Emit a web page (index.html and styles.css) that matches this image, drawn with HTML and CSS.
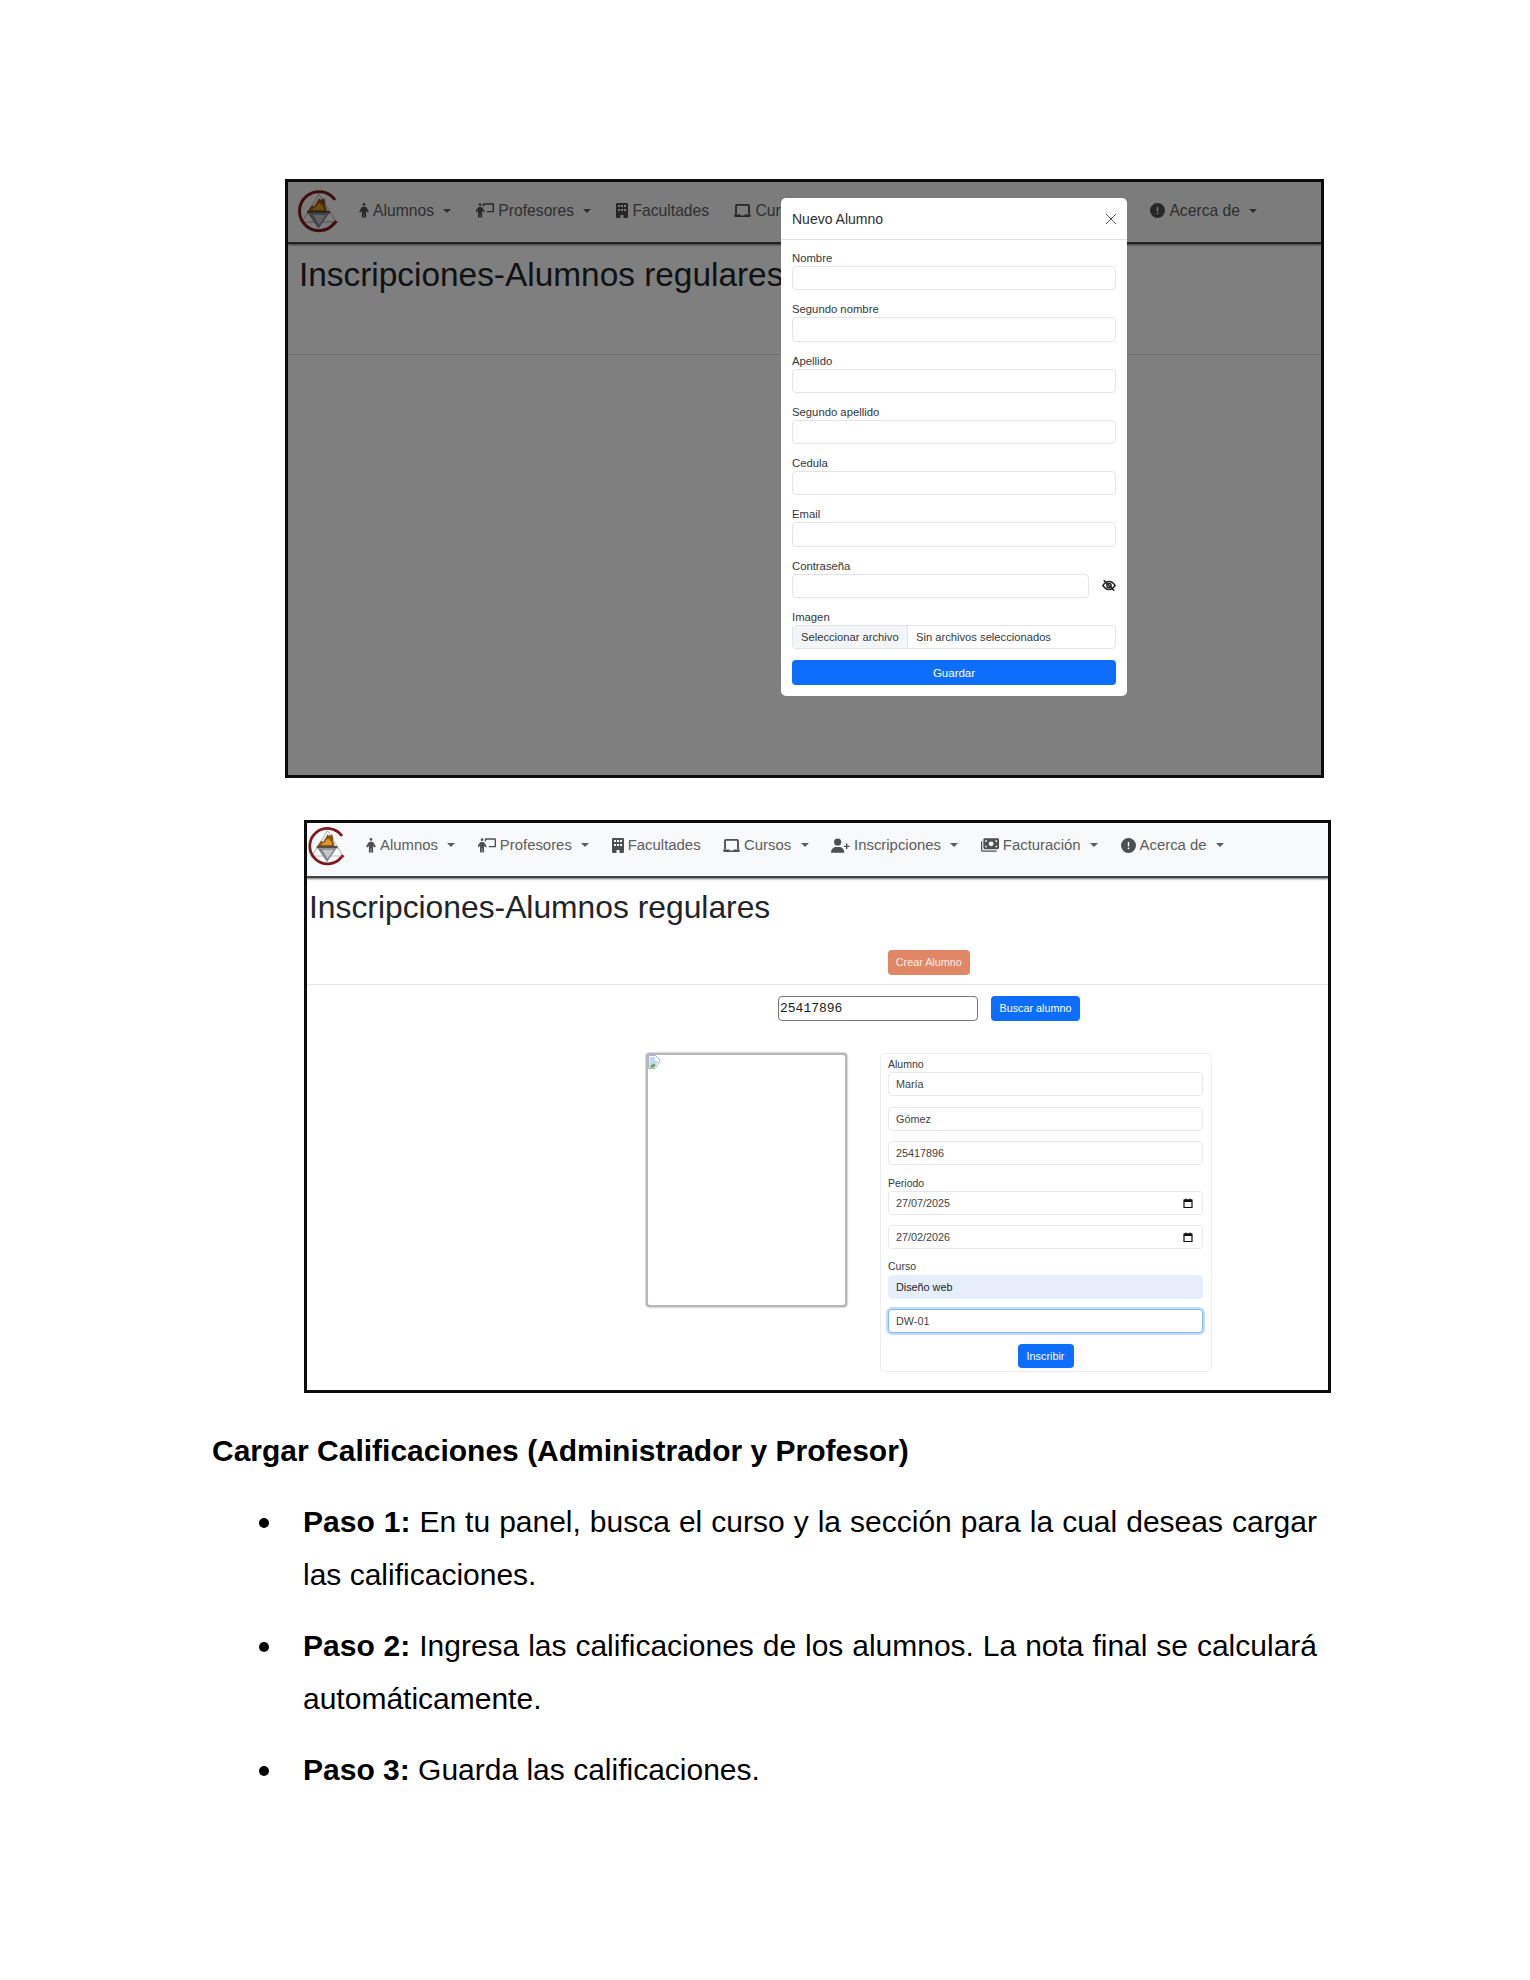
FILE: index.html
```html
<!DOCTYPE html>
<html lang="es">
<head>
<meta charset="utf-8">
<title>Manual de usuario</title>
<link rel="stylesheet" href="styles.css">
</head>
<body>
<svg class="sprite" aria-hidden="true">
  <symbol id="i-person" viewBox="0 0 320 512"><path d="M112 48a48 48 0 1 1 96 0 48 48 0 1 1 -96 0zm40 304V480c0 17.7-14.3 32-32 32s-32-14.3-32-32V256.900L59.400 304.500c-9.100 15.100-28.800 20-43.900 10.900s-20-28.800-10.900-43.900l58.300-97c17.400-28.900 48.600-46.600 82.300-46.600h29.700c33.700 0 64.900 17.700 82.300 46.600l58.300 97c9.100 15.100 4.200 34.800-10.900 43.900s-34.800 4.200-43.900-10.900L232 256.900V480c0 17.700-14.300 32-32 32s-32-14.300-32-32V352H152z"/></symbol>
  <symbol id="i-teacher" viewBox="0 0 640 512"><path d="M144 96a48 48 0 1 0 0-96 48 48 0 1 0 0 96zm-8 384V352h16v128c0 17.700 14.300 32 32 32s32-14.300 32-32V256.900l28.600 47.500c9.100 15.100 28.800 20 43.900 10.900s20-28.800 10.900-43.900l-58.300-97c-17.400-28.900-48.600-46.600-82.300-46.600H129.100c-33.700 0-64.900 17.700-82.300 46.600l-58.300 97c-9.100 15.100-4.200 34.800 10.900 43.900s34.800 4.200 43.900-10.900L72 256.900V480c0 17.700 14.300 32 32 32s32-14.300 32-32z"/><path d="M240 32c0-17.700 14.300-32 32-32H608c17.700 0 32 14.300 32 32V288c0 17.700-14.300 32-32 32H384V272H592V48H288v64H240z"/></symbol>
  <symbol id="i-building" viewBox="0 0 12 15"><path fill-rule="evenodd" d="M1.200 0h9.600A1.200 1.200 0 0 1 12 1.200v12.600a1.200 1.200 0 0 1-1.200 1.200H7.500v-3h-3v3H1.200A1.200 1.200 0 0 1 0 13.800V1.200A1.200 1.200 0 0 1 1.200 0zM2 2v2h2V2zm3 0v2h2V2zm3 0v2h2V2zM2 6v2h2V6zm3 0v2h2V6zm3 0v2h2V6z"/></symbol>
  <symbol id="i-laptop" viewBox="0 0 18 14"><path fill-rule="evenodd" d="M3 0h12a2 2 0 0 1 2 2v9h-2V2H3v9H1V2a2 2 0 0 1 2-2z"/><path d="M0 11.300h6.800v1h4.400v-1H18v1A1.700 1.700 0 0 1 16.300 14H1.700A1.700 1.700 0 0 1 0 12.300z"/></symbol>
  <symbol id="i-userplus" viewBox="0 0 20 15"><circle cx="7" cy="3.800" r="3.800"/><path d="M0 15c0-4 2.800-6 5.500-6h3c2.700 0 5.500 2 5.500 6z"/><path d="M15.800 5.500h1.500v2.200h2.200v1.300h-2.200v2.200h-1.500V9h-2.200V7.700h2.200z"/></symbol>
  <symbol id="i-money" viewBox="0 0 19 14"><path fill-rule="evenodd" d="M4 0h13.500A1.500 1.500 0 0 1 19 1.500v8.500a1.500 1.500 0 0 1-1.500 1.500H4A1.500 1.500 0 0 1 2.500 10V1.500A1.500 1.500 0 0 1 4 0zm6.700 3.200a2.600 2.600 0 1 0 0 5.200 2.600 2.600 0 1 0 0-5.200zM4.500 2v2a2 2 0 0 0 2-2zm10.500 0a2 2 0 0 0 2 2V2zM4.500 9.500h2a2 2 0 0 0-2-2zm12.500 0v-2a2 2 0 0 0-2 2z"/><path d="M0 3h1.300v9A.8.800 0 0 0 2 12.700h14.500V14H1.800A1.800 1.800 0 0 1 0 12.200z"/></symbol>
  <symbol id="i-alert" viewBox="0 0 512 512"><path d="M256 512A256 256 0 1 0 256 0a256 256 0 1 0 0 512zm0-384c13.300 0 24 10.700 24 24V264c0 13.300-10.700 24-24 24s-24-10.700-24-24V152c0-13.300 10.700-24 24-24zM224 352a32 32 0 1 1 64 0 32 32 0 1 1 -64 0z"/></symbol>
  <symbol id="i-logo" viewBox="0 0 44 44">
    <path d="M22 5 39 33H5z" fill="none" stroke="#c4bfba" stroke-width="1.300"/>
    <path d="M38 11A19.500 19.500 0 1 0 37.500 34" fill="none" stroke="#7d1a1f" stroke-width="3"/>
    <path d="M37 31l4 2-3.500 3z" fill="#7d1a1f"/>
    <path d="M11 22c1-3 3-3 4-6 1 1 2 1 2 2 1-3 3-4 5-9 1 2 3 2 5 0 1 3 2 4 1 7l2 6z" fill="#8f5216"/>
    <path d="M15 21c1-2 3-3 4-3 1-3 3-4 4-4 1 2 4 2 4 7z" fill="#d99a2b"/>
    <path d="M10 22h23v2.500H10z" fill="#57503f"/>
    <path d="M11 24.500h21l-10.500 15z" fill="#7f8488"/>
    <path d="M16 26h13l-7 10z" fill="#c3c7ca"/>
  </symbol>
</svg>

<main class="page">
  <section class="shot shot--dim">
    <nav class="nav">
      <svg class="logo"><use href="#i-logo"/></svg>
      <ul class="menu">
        <li class="item"><svg class="ic ic-person"><use href="#i-person"/></svg>Alumnos<i class="caret"></i></li>
        <li class="item"><svg class="ic ic-teacher"><use href="#i-teacher"/></svg>Profesores<i class="caret"></i></li>
        <li class="item"><svg class="ic ic-building"><use href="#i-building"/></svg>Facultades</li>
        <li class="item"><svg class="ic ic-laptop"><use href="#i-laptop"/></svg>Cursos<i class="caret"></i></li>
        <li class="item"><svg class="ic ic-userplus"><use href="#i-userplus"/></svg>Inscripciones<i class="caret"></i></li>
        <li class="item"><svg class="ic ic-money"><use href="#i-money"/></svg>Facturación<i class="caret"></i></li>
        <li class="item"><svg class="ic ic-alert"><use href="#i-alert"/></svg>Acerca de<i class="caret"></i></li>
      </ul>
    </nav>
    <h1 class="title">Inscripciones-Alumnos regulares</h1>
    <hr class="rule">
    <div class="backdrop"></div>
    <div class="modal">
      <header class="modal-head">
        <span>Nuevo Alumno</span>
        <svg class="close" viewBox="0 0 12 12"><path d="M1 1l10 10M11 1 1 11"/></svg>
      </header>
      <form class="modal-body">
        <label class="mfield"><span class="mlabel">Nombre</span><input class="minput"></label>
        <label class="mfield"><span class="mlabel">Segundo nombre</span><input class="minput"></label>
        <label class="mfield"><span class="mlabel">Apellido</span><input class="minput"></label>
        <label class="mfield"><span class="mlabel">Segundo apellido</span><input class="minput"></label>
        <label class="mfield"><span class="mlabel">Cedula</span><input class="minput"></label>
        <label class="mfield"><span class="mlabel">Email</span><input class="minput"></label>
        <div class="mfield">
          <span class="mlabel">Contraseña</span>
          <div class="pass-row">
            <input class="minput minput--pass">
            <svg class="eye" viewBox="0 0 16 14"><path d="M1 7c2-3 4.500-4.500 7-4.500S13 4 15 7c-2 3-4.500 4.500-7 4.500S3 10 1 7z"/><circle cx="8" cy="7" r="2.400"/><path d="M2 1l12 12"/></svg>
          </div>
        </div>
        <div class="mfield">
          <span class="mlabel">Imagen</span>
          <div class="file"><span class="file-btn">Seleccionar archivo</span><span class="file-name">Sin archivos seleccionados</span></div>
        </div>
        <button class="save" type="button">Guardar</button>
      </form>
    </div>
  </section>

  <section class="shot shot--live">
    <nav class="nav">
      <svg class="logo"><use href="#i-logo"/></svg>
      <ul class="menu">
        <li class="item"><svg class="ic ic-person"><use href="#i-person"/></svg>Alumnos<i class="caret"></i></li>
        <li class="item"><svg class="ic ic-teacher"><use href="#i-teacher"/></svg>Profesores<i class="caret"></i></li>
        <li class="item"><svg class="ic ic-building"><use href="#i-building"/></svg>Facultades</li>
        <li class="item"><svg class="ic ic-laptop"><use href="#i-laptop"/></svg>Cursos<i class="caret"></i></li>
        <li class="item"><svg class="ic ic-userplus"><use href="#i-userplus"/></svg>Inscripciones<i class="caret"></i></li>
        <li class="item"><svg class="ic ic-money"><use href="#i-money"/></svg>Facturación<i class="caret"></i></li>
        <li class="item"><svg class="ic ic-alert"><use href="#i-alert"/></svg>Acerca de<i class="caret"></i></li>
      </ul>
    </nav>
    <h1 class="title">Inscripciones-Alumnos regulares</h1>
    <div class="create-row"><button class="btn btn--create" type="button">Crear Alumno</button></div>
    <hr class="rule">
    <div class="search-row">
      <input class="search" value="25417896">
      <button class="btn btn--blue btn--search" type="button">Buscar alumno</button>
    </div>
    <div class="enrol">
      <div class="photo">
        <svg class="broken" viewBox="0 0 12 14"><path d="M.5.500h7l4 4V7L7 13.500H.5z" fill="#fff" stroke="#a9b4c6"/><path d="M1.500 2h5.500v3.500l3 .5V7l-4 5.500H1.500z" fill="#c5d6f2"/><path d="M1.500 12.500l3.500-4 2.500 1.500 1-.5-3 3z" fill="#5fa84a"/></svg>
      </div>
      <form class="card">
        <span class="clabel">Alumno</span>
        <input class="cinput" value="María">
        <input class="cinput" value="Gómez">
        <input class="cinput" value="25417896">
        <span class="clabel">Periodo</span>
        <div class="cinput cdate">27/07/2025<svg class="cal" viewBox="0 0 10 10"><path d="M1 2h8v7.500H1z" fill="none" stroke="#111" stroke-width="1.200"/><path d="M1 1.500h8V4H1zM2.500 .5h1v1h-1zM6.500 .5h1v1h-1z" fill="#111"/></svg></div>
        <div class="cinput cdate">27/02/2026<svg class="cal" viewBox="0 0 10 10"><path d="M1 2h8v7.500H1z" fill="none" stroke="#111" stroke-width="1.200"/><path d="M1 1.500h8V4H1zM2.500 .5h1v1h-1zM6.500 .5h1v1h-1z" fill="#111"/></svg></div>
        <span class="clabel clabel--clip">Curso</span>
        <div class="cinput cselect">Diseño web</div>
        <input class="cinput cinput--focus" value="DW-01">
        <button class="btn btn--blue btn--enrol" type="button">Inscribir</button>
      </form>
    </div>
  </section>

  <h2 class="doc-head">Cargar Calificaciones (Administrador y Profesor)</h2>
  <ul class="steps">
    <li class="step"><b>Paso 1:</b> En tu panel, busca el curso y la sección para la cual deseas cargar las calificaciones.</li>
    <li class="step"><b>Paso 2:</b> Ingresa las calificaciones de los alumnos. La nota final se calculará automáticamente.</li>
    <li class="step"><b>Paso 3:</b> Guarda las calificaciones.</li>
  </ul>
</main>
</body>
</html>
```

FILE: styles.css
```css
* { box-sizing: border-box; }
html, body { margin: 0; background: #fff; }
body { font-family: "Liberation Sans", Arial, sans-serif; color: #000; }
.sprite { display: none; }
.page { height: 1980px; padding-top: 179px; overflow: hidden; }

/* Screenshot frames */
.shot { position: relative; border: 3px solid #0c0c0c; background: #fff; overflow: hidden; }
.shot--dim { margin-left: 285px; width: 1039px; height: 599px; }
.shot--live { margin: 42px 0 0 304px; width: 1027px; height: 573px; }

/* Navbar */
.nav { display: flex; align-items: center; background: #f8f9fa; border-bottom: 2px solid #444; box-shadow: 0 1px 2px rgba(0,0,0,.6); }
.shot--dim .nav { height: 62px; padding-left: 9px; font-size: 15.700px; --gap: 25.250px; --tgap: 9px; }
.shot--live .nav { height: 55px; padding-left: 0; font-size: 14.900px; --gap: 22.400px; --tgap: 9.500px; }
.logo { flex: none; }
.shot--dim .logo { width: 44px; height: 44px; margin-top: -3px; }
.shot--live .logo { width: 41px; height: 40px; margin-top: -8px; }
.menu { display: flex; align-items: center; list-style: none; margin: 0; padding: 0; gap: var(--gap); color: #5c5d5e; white-space: nowrap; }
.shot--dim .menu { margin-left: 18px; margin-top: -3px; }
.shot--live .menu { margin-left: 18px; margin-top: -9px; }
.item { display: flex; align-items: center; }
.ic { fill: #4e4f50; flex: none; margin-right: 4px; }
.ic-person { width: 10px; height: 15px; }
.ic-teacher { width: 18px; height: 15px; }
.ic-building { width: 12px; height: 15px; }
.ic-laptop { width: 17px; height: 13px; }
.ic-userplus { width: 19px; height: 15px; }
.ic-money { width: 18px; height: 14px; }
.ic-alert { width: 15px; height: 15px; }
.caret { width: 0; height: 0; margin-left: var(--tgap); border-top: 4px solid #5c5d5e; border-left: 4px solid transparent; border-right: 4px solid transparent; }

/* Page heading */
.title { margin: 0; font-weight: 400; color: #212529; white-space: nowrap; }
.shot--dim .title { font-size: 33.400px; line-height: 40px; padding-left: 11px; margin-top: 11px; height: 98.500px; }
.shot--live .title { font-size: 31.800px; line-height: 38px; padding-left: 2px; margin-top: 10px; }
.rule { margin: 0; border: 0; height: 1px; background: #e3e4e5; }

/* Dimmed modal */
.backdrop { position: absolute; inset: 0; background: rgba(0,0,0,.5); }
.modal { position: absolute; left: 493px; top: 16px; width: 346px; height: 498px; background: #fff; border-radius: 5px; color: #2b2f33; }
.modal-head { display: flex; align-items: center; justify-content: space-between; height: 42px; padding: 0 10px 0 11px; border-bottom: 1px solid #dee2e6; font-size: 14px; }
.close { width: 12px; height: 12px; fill: none; stroke: #555; stroke-width: 1; }
.modal-body { display: block; padding: 10px 11px 0; }
.mfield { display: block; height: 51.250px; }
.mlabel { display: block; height: 16px; font-size: 11.300px; line-height: 16px; color: #33373b; }
.minput { display: block; width: 100%; height: 24.400px; border: 1px solid #e2e5e8; border-radius: 4px; background: #fff; padding: 0 8px; }
.pass-row { display: flex; align-items: center; justify-content: space-between; }
.minput--pass { width: 297px; }
.eye { width: 14px; height: 13px; margin-right: 0; fill: none; stroke: #222; stroke-width: 1.700; }
.file { display: flex; align-items: stretch; height: 24.400px; border: 1px solid #e2e5e8; border-radius: 4px; overflow: hidden; font-size: 11.200px; line-height: 22px; color: #33373b; }
.file-btn { width: 115px; padding-left: 8px; background: #f4f5f6; border-right: 1px solid #e2e5e8; }
.file-name { padding-left: 8px; }
.save { display: block; width: 100%; height: 25px; border: 0; border-radius: 4px; background: #0d6efd; color: #fff; font: 11.500px "Liberation Sans", Arial, sans-serif; }

/* Buttons */
.btn { display: block; padding: 0; height: 24.500px; border: 0; border-radius: 4px; color: #fff; font: 10.800px "Liberation Sans", Arial, sans-serif; }
.btn--blue { background: #0d6efd; }
.btn--create { width: 82.500px; background: #e08768; color: #fbeee8; }
.create-row { display: flex; padding-left: 580.500px; margin-top: 24px; margin-bottom: 9px; }

/* Search */
.search-row { display: flex; align-items: center; gap: 13px; padding: 11.500px 0 0 471px; }
.search { width: 200px; height: 24.500px; padding: 0 1px; border: 1px solid #777; border-radius: 4px; background: #fff; color: #222; font: 13px "Liberation Mono", monospace; }
.btn--search { width: 89px; }

/* Enrolment */
.enrol { display: flex; align-items: flex-start; gap: 33px; padding: 32px 0 0 339px; }
.photo { width: 201px; height: 254px; border: 2px solid #b8b8b8; border-radius: 4px; box-shadow: 0 0 2px rgba(0,0,0,.55); background: #fff; }
.broken { display: block; width: 12px; height: 14px; }
.card { display: block; width: 332px; height: 319px; padding: 3.500px 8px 0 7px; border: 1px solid #eceef0; border-radius: 4px; background: #fff; }
.clabel { display: block; height: 15px; font-size: 10.500px; line-height: 15px; color: #33373b; }
.clabel--clip { height: 11px; line-height: 13px; margin-bottom: 4px; overflow: hidden; }
.cinput { display: flex; align-items: center; width: 100%; height: 24px; margin-bottom: 10.500px; padding: 0 9px 0 7px; border: 1px solid #e6e8ea; border-radius: 4px; background: #fff; color: #3e4246; font: 10.800px "Liberation Sans", Arial, sans-serif; }
.cdate { justify-content: space-between; }
.cal { width: 10px; height: 10px; }
.cselect { background: #e7eefb; border-color: #e7eefb; color: #212529; }
.cinput--focus { border-color: #86b7fe; box-shadow: 0 0 0 2px rgba(13,110,253,.25); outline: 0; }
.btn--enrol { width: 56px; height: 24px; margin: 0 auto; }

/* Document text */
.doc-head { margin: 31.300px 0 18px 212px; font-size: 30px; line-height: 53px; font-weight: 700; }
.steps { list-style: none; margin: 0; padding: 0 213px 0 303px; }
.step { position: relative; font-size: 30px; line-height: 53px; margin-bottom: 18px; text-align: justify; }
.step::before { content: ""; position: absolute; left: -44px; top: 23px; width: 10px; height: 10px; border-radius: 50%; background: #000; }
```
